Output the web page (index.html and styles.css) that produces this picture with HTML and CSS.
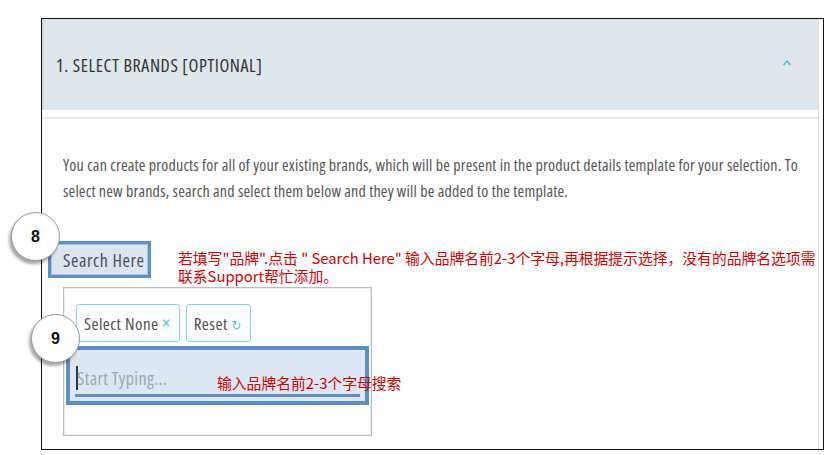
FILE: index.html
```html
<!DOCTYPE html>
<html>
  <head>
    <title>Select Brands</title>
    <link rel="stylesheet" href="styles.css">
  </head>

  <body>
    <div class="frame">
      <div class="panel">
        <!-- Panel header -->
        <div class="panel-head">
          <span class="panel-title">1. SELECT BRANDS [OPTIONAL]</span>
          <span class="chevron">
            <svg width="10" height="7" viewBox="0 0 10 7"><path d="M1.5 6 L5 2 L8.5 6" fill="none" stroke="#5bbfe0" stroke-width="1.8"/></svg>
          </span>
        </div>
        <div class="panel-rule"></div>

        <!-- Panel body -->
        <p class="intro">You can create products for all of your existing brands, which will be present in the product details template for your selection. To select new brands, search and select them below and they will be added to the template.</p>

        <button class="search-btn">Search Here</button>

        <div class="dropdown">
          <div class="dropdown-actions">
            <button class="action-btn">Select None <span class="action-icon">&times;</span></button>
            <button class="action-btn">Reset <span class="action-icon reset-icon">&#x21bb;</span></button>
          </div>
          <div class="search-input">
            <span class="caret"></span><span class="placeholder">Start Typing...</span>
            <span class="input-line"></span>
          </div>
        </div>
      </div>

      <!-- Annotations laid over the screenshot -->
      <div class="step step-8">8</div>
      <div class="step step-9">9</div>
      <p class="note note-search">若填写"品牌".点击 " Search Here" 输入品牌名前2-3个字母,再根据提示选择，没有的品牌名选项需<br>联系Support帮忙添加。</p>
      <p class="note note-input">输入品牌名前2-3个字母搜索</p>
    </div>
  </body>
</html>
```

FILE: styles.css
```css
/* Select brands panel */
body{
  margin: 0;
  background-color: white;
  font-family: "Open Sans", Arial, sans-serif;
}

.frame{
  /* black outline round the screenshot */
  position: relative;
  margin: 18px 0 0 41px;
  width: 781px;
  height: 430px;
  border: 1px solid #111;
}

.panel{
  height: 100%;
  margin-right: 4px;
  border-right: 1px solid #dcdcdc;
}

.panel-head{
  display: flex;
  align-items: center;
  justify-content: space-between;
  height: 91px;
  padding: 0 26px 0 12px;
  background-color: #dfe6ec;
  border-left: 2px solid #c8dce2;
}

.panel-title{
  font-size: 18px;
  font-stretch: 82%;
  letter-spacing: 0.6px;
  color: #333;
}

.chevron{
  display: flex;
  margin-top: -4px;
}

.panel-rule{
  margin-top: 7px;
  height: 2px;
  background-color: #e9ecee;
}

.intro{
  margin: 0;
  padding: 33px 12px 0 21px;
  font-size: 16px;
  font-stretch: 82%;
  letter-spacing: 0.2px;
  line-height: 26px;
  color: #555;
}

.search-btn{
  display: block;
  margin: 37px 0 0 6px;
  width: 103px;
  height: 37px;
  padding: 0 0 0 12px;
  text-align: left;
  background-color: #dde4ee;
  border: 3px solid #5b8fc5;
  box-shadow: inset 0 0 0 1px #a9c4e0;
  font-family: "Open Sans", Arial, sans-serif;
  font-size: 18px;
  font-stretch: 82%;
  letter-spacing: 0.6px;
  color: #4a5162;
}

.dropdown{
  margin: 9px 0 0 21px;
  width: 303px;
  height: 131px;
  padding: 16px 2px 0 2px;
  border: 1px solid #bdbdbd;
  box-shadow: inset 0 0 0 1px #ececec;
}

.dropdown-actions{
  display: flex;
  gap: 6px;
  margin-left: 10px;
}

.action-btn{
  height: 38px;
  padding: 0 8px 0 7px;
  background-color: white;
  border: 1px solid #86d3e3;
  border-radius: 3px;
  font-family: "Open Sans", Arial, sans-serif;
  font-size: 17px;
  font-stretch: 82%;
  letter-spacing: 0.45px;
  color: #4f4f4f;
}

.action-icon{
  color: #5bbfe0;
  font-size: 19px;
  line-height: 1;
}

.reset-icon{
  font-family: "DejaVu Sans", sans-serif;
  font-size: 13px;
}

.search-input{
  position: relative;
  display: flex;
  align-items: center;
  box-sizing: border-box;
  margin-top: 4px;
  height: 59px;
  padding: 4px 0 0 6px;
  background-color: #dde7f3;
  border: 4px solid #5d8fc4;
}

.caret{
  width: 2px;
  height: 24px;
  background-color: #333;
}

.placeholder{
  margin-left: -1px;
  font-size: 18px;
  font-stretch: 82%;
  letter-spacing: 0.35px;
  color: #9ea7b6;
}

.input-line{
  position: absolute;
  left: 5px;
  right: 5px;
  bottom: 4px;
  height: 3px;
  background-color: #5d8fc4;
}

.step{
  /* numbered circles of the walkthrough */
  position: absolute;
  width: 47px;
  height: 47px;
  border-radius: 50%;
  background-color: white;
  border: 1px solid #9a9a9a;
  box-shadow: -2px 3px 3px rgba(0, 0, 0, 0.35);
  display: flex;
  align-items: center;
  justify-content: center;
  font-family: Arial, sans-serif;
  font-weight: bold;
  font-size: 16px;
  color: #111;
}

.step-8{
  left: -31px;
  top: 193px;
}

.step-9{
  left: -11px;
  top: 295px;
}

.note{
  position: absolute;
  margin: 0;
  white-space: nowrap;
  font-family: "Noto Sans CJK SC", sans-serif;
  font-size: 14.8px;
  line-height: 18px;
  color: #d40000;
}

.note-search{
  left: 136px;
  top: 230px;
}

.note-input{
  left: 175px;
  top: 355px;
}
```
